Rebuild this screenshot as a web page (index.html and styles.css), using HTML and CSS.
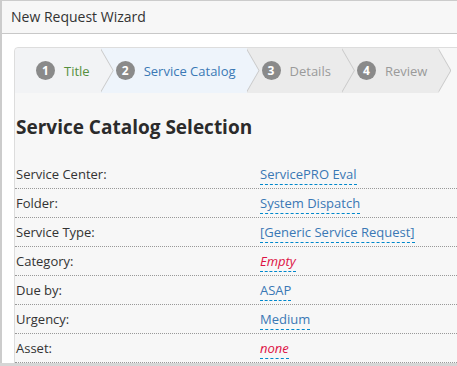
FILE: index.html
```html
<!DOCTYPE html>
<html lang="en">
<head>
  <meta charset="UTF-8">
  <title>New Request Wizard</title>
  <link rel="stylesheet" href="styles.css">
</head>
<body>
  <div class="window">
    <div class="window-header">New Request Wizard</div>

    <div class="panel">
      <ol class="steps">
        <li class="step done"><span class="num">1</span>Title</li>
        <li class="step active"><span class="num">2</span>Service Catalog</li>
        <li class="step"><span class="num">3</span>Details</li>
        <li class="step"><span class="num">4</span>Review</li>
      </ol>

      <h2>Service Catalog Selection</h2>

      <div class="fields">
        <div class="field">
          <span class="label">Service Center:</span>
          <span><a class="editable">ServicePRO Eval</a></span>
        </div>
        <div class="field">
          <span class="label">Folder:</span>
          <span><a class="editable">System Dispatch</a></span>
        </div>
        <div class="field">
          <span class="label">Service Type:</span>
          <span><a class="editable">[Generic Service Request]</a></span>
        </div>
        <div class="field">
          <span class="label">Category:</span>
          <span><a class="editable empty">Empty</a></span>
        </div>
        <div class="field">
          <span class="label">Due by:</span>
          <span><a class="editable">ASAP</a></span>
        </div>
        <div class="field">
          <span class="label">Urgency:</span>
          <span><a class="editable">Medium</a></span>
        </div>
        <div class="field">
          <span class="label">Asset:</span>
          <span><a class="editable empty">none</a></span>
        </div>
      </div>
    </div>
  </div>
</body>
</html>
```

FILE: styles.css
```css
html, body {
  margin: 0;
  height: 100%;
}
body {
  font-family: 'Open Sans', sans-serif;
  background: #d6d6d6;
  color: #333;
  overflow: hidden;
}
.window {
  height: 362px;
  background: #fff;
  border-top: 1px solid #ccc;
  border-left: 2px solid #ccc;
  overflow: hidden;
}
.window-header {
  height: 32px;
  line-height: 32px;
  padding-left: 9px;
  font-size: 14px;
  background: #f7f7f7;
  border-bottom: 1px solid #c8c8c8;
}
.panel {
  margin: 13px 0 0 12px;
  width: 480px;
  height: 400px;
  background: #f7f7f7;
  border: 1px solid #ddd;
  border-radius: 4px;
}
.steps {
  display: flex;
  height: 45px;
  margin: 0;
  padding: 0;
  list-style: none;
}
.step {
  position: relative;
  display: flex;
  align-items: center;
  gap: 9px;
  padding: 0 11px 0 15px;
  font-size: 13px;
  color: #9a9a9a;
  background: #ebebeb;
}
.step:first-child {
  padding-left: 21px;
  border-top-left-radius: 4px;
}
.step::before,
.step::after {
  content: "";
  position: absolute;
  top: 0;
  width: 13px;
  height: 100%;
  z-index: 1;
  clip-path: polygon(0 0, 100% 50%, 0 100%);
}
.step::before {
  right: -13px;
  background: #c9c9c9;
}
.step::after {
  right: -12px;
  background: inherit;
}
.step.done {
  color: #56903e;
  background: #f2f3f5;
}
.step.active {
  color: #3a78b5;
  background: #eef4fb;
}
.num {
  width: 19px;
  height: 19px;
  border-radius: 50%;
  background: #8a8a8a;
  color: #fff;
  font-size: 12px;
  font-weight: 700;
  display: flex;
  align-items: center;
  justify-content: center;
}
h2 {
  margin: 0;
  padding: 21px 0 0 1px;
  height: 46px;
  font-size: 19px;
  font-weight: 700;
  color: #2b2b2b;
}
.field {
  display: grid;
  grid-template-columns: 244px 1fr;
  align-items: center;
  height: 28px;
  padding-left: 1px;
  font-size: 13px;
  border-bottom: 1px dotted #999;
}
.editable {
  color: #3a78b5;
  border-bottom: 1px dashed #0088cc;
  padding-bottom: 1px;
}
.editable.empty {
  color: #dd1144;
  font-style: italic;
}
```
